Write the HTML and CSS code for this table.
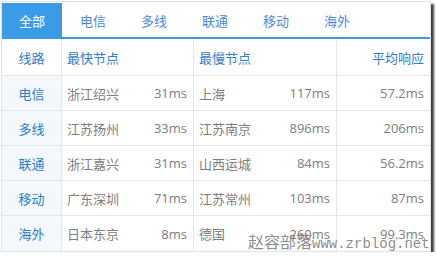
FILE: index.html
```html
<!DOCTYPE html>
<html lang="zh-CN">
<head>
<meta charset="utf-8">
<title>线路测速</title>
<link rel="stylesheet" href="styles.css">
</head>
<body>
<div class="panel">
  <div class="tabs">
    <div class="tab active">全部</div>
    <div class="tab">电信</div>
    <div class="tab">多线</div>
    <div class="tab">联通</div>
    <div class="tab">移动</div>
    <div class="tab">海外</div>
  </div>
  <div class="table">
    <div class="row head">
      <div class="cell line">线路</div>
      <div class="cell node">最快节点</div>
      <div class="cell node">最慢节点</div>
      <div class="cell avg">平均响应</div>
    </div>
    <div class="row">
      <div class="cell line">电信</div>
      <div class="cell node"><span>浙江绍兴</span><span>31ms</span></div>
      <div class="cell node"><span>上海</span><span>117ms</span></div>
      <div class="cell avg">57.2ms</div>
    </div>
    <div class="row">
      <div class="cell line">多线</div>
      <div class="cell node"><span>江苏扬州</span><span>33ms</span></div>
      <div class="cell node"><span>江苏南京</span><span>896ms</span></div>
      <div class="cell avg">206ms</div>
    </div>
    <div class="row">
      <div class="cell line">联通</div>
      <div class="cell node"><span>浙江嘉兴</span><span>31ms</span></div>
      <div class="cell node"><span>山西运城</span><span>84ms</span></div>
      <div class="cell avg">56.2ms</div>
    </div>
    <div class="row">
      <div class="cell line">移动</div>
      <div class="cell node"><span>广东深圳</span><span>71ms</span></div>
      <div class="cell node"><span>江苏常州</span><span>103ms</span></div>
      <div class="cell avg">87ms</div>
    </div>
    <div class="row last">
      <div class="cell line">海外</div>
      <div class="cell node"><span>日本东京</span><span>8ms</span></div>
      <div class="cell node"><span>德国</span><span>260ms</span></div>
      <div class="cell avg">99.3ms</div>
    </div>
  </div>
  <div class="watermark"><span class="wm-cn">赵容部落</span><span class="wm-url">www.zrblog.net</span></div>
</div>
</body>
</html>
```

FILE: styles.css
```css
html, body {
  margin: 0;
  padding: 0;
  background: #ffffff;
}
body {
  padding: 1px 0 0 1px;
  font-family: "Open Sans", "Noto Sans CJK SC", sans-serif;
  font-size: 13px;
}
.panel {
  position: relative;
  width: 428px;
  height: 249px;
  border: 1px solid #e2e2e2;
  box-shadow: 3px 3px 2px rgba(0, 0, 0, 0.75);
  background: #fff;
  overflow: visible;
}
.tabs {
  display: flex;
  gap: 1px;
  padding-top: 1px;
  height: 34px;
  border-bottom: 2px solid #3a9ce6;
}
.tab {
  width: 60px;
  display: flex;
  align-items: center;
  justify-content: center;
  color: #4d88d6;
}
.tab.active {
  background: #3a9ce6;
  color: #fff;
}
.table {
  display: flex;
  flex-direction: column;
}
.row {
  display: grid;
  grid-template-columns: 60px 132px 143px 93px;
  height: 35px;
  border-bottom: 1px solid #e6e6e6;
  box-sizing: border-box;
}
.row.head {
  height: 37px;
}
.row.last {
  border-bottom: none;
  height: 35px;
}
.cell {
  display: flex;
  align-items: center;
  border-right: 1px solid #e6e6e6;
  color: #7d7d7d;
  box-sizing: border-box;
}
.cell.avg {
  border-right: none;
  justify-content: flex-end;
  padding-right: 6px;
}
.cell.line {
  justify-content: center;
  color: #2a7cc8;
  background: #f4f8fc;
}
.cell.node {
  justify-content: space-between;
  padding: 0 6px 0 5px;
}
.head .cell {
  color: #2f7ecb;
  background: #fff;
}
.watermark {
  position: absolute;
  left: 246px;
  top: 227px;
  display: flex;
  align-items: baseline;
  color: rgba(110, 110, 110, 0.8);
  white-space: nowrap;
}
.wm-cn {
  font-family: "Noto Sans CJK SC", sans-serif;
  font-size: 16px;
}
.wm-url {
  font-family: "Liberation Mono", monospace;
  font-size: 14px;
}
```
